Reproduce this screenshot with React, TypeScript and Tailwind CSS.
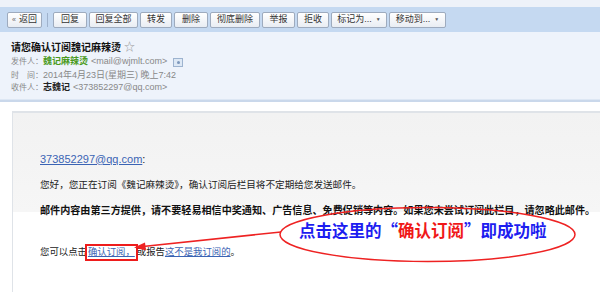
import React from "react";

const F = { fontFamily: '"Liberation Sans", "Noto Sans CJK SC", sans-serif' };

function Btn({ w, children, caret }: { w: number; children: React.ReactNode; caret?: boolean }) {
  return (
    <div
      className="h-[16px] flex items-center justify-center rounded-[2px] border border-[#9eabbe] bg-gradient-to-b from-white to-[#e9edf3] text-[9px] text-[#333] shrink-0 whitespace-nowrap"
      style={{ width: w }}
    >
      <span>{children}</span>
      {caret && <span className="ml-[4px] text-[5px] text-[#555]">▼</span>}
    </div>
  );
}

export default function App() {
  return (
    <div className="w-[600px] h-[292px] overflow-hidden bg-white relative" style={F}>
      <div className="h-[7px] bg-[#eef2f9]" />
      <div className="h-[25px] bg-[#c5d9f1] flex items-center pl-[7px]">
        <Btn w={35}>
          <span className="text-[7px] text-[#666] mr-[3px]">«</span>返回
        </Btn>
        <div className="w-px h-[14px] bg-[#9fb2cc] mx-[5px]" />
        <div className="flex gap-[2px]">
          <Btn w={34}>回复</Btn>
          <Btn w={49}>回复全部</Btn>
          <Btn w={32}>转发</Btn>
          <Btn w={34}>删除</Btn>
          <Btn w={50}>彻底删除</Btn>
          <Btn w={33}>举报</Btn>
          <Btn w={32}>拒收</Btn>
          <Btn w={56} caret>标记为...</Btn>
          <Btn w={57} caret>移动到...</Btn>
        </div>
      </div>
      <div className="h-[67px] bg-[#eef3fb] pl-[11px] pt-[7px] whitespace-nowrap">
        <div className="h-[16px] flex items-center text-[10px] font-bold text-[#111]">
          请您确认订阅魏记麻辣烫
          <span className="ml-[3px] text-[11px] font-normal text-[#999]">☆</span>
        </div>
        <div className="h-[14px] flex items-center text-[9px] text-[#888]">
          <span className="w-[32px] shrink-0 text-[8px]">发件人：</span>
          <span className="text-[#4a9a1c] font-bold">魏记麻辣烫</span>
          <span className="ml-[3px] text-[#888]">&lt;mail@wjmlt.com&gt;</span>
          <span className="ml-[6px] w-[10px] h-[9px] border border-[#9db3cf] bg-[#dde8f5] flex items-center justify-center">
            <span className="w-[3px] h-[3px] rounded-full bg-[#7d97bb]" />
          </span>
        </div>
        <div className="h-[13px] flex items-center text-[9px] text-[#888]">
          <span className="w-[32px] shrink-0 text-[8px]">时　间：</span>
          <span>2014年4月23日(星期三) 晚上7:42</span>
        </div>
        <div className="h-[12px] flex items-center text-[9px] text-[#888]">
          <span className="w-[32px] shrink-0 text-[8px]">收件人：</span>
          <span className="text-[#222] font-bold">志魏记</span>
          <span className="ml-[3px]">&lt;373852297@qq.com&gt;</span>
        </div>
      </div>
      <div className="h-[3px] bg-[#dde7f4] border-b-2 border-[#cad8eb]" />
      <div className="h-[9px] bg-white" />
      <div className="ml-[12px] h-[200px] border-l border-t-2 border-[#dfe3e8] bg-gradient-to-b from-[#f2f2f2] via-[#f6f6f6] to-white to-[35%] pl-[27px] pt-[39px] text-[#222] whitespace-nowrap">
        <div className="h-[14px] flex items-center text-[11px]">
          <span className="text-[#3b64b4] underline">373852297@qq.com</span>:
        </div>
        <div className="h-[12px]" />
        <div className="h-[14px] flex items-center text-[9.6px]">
          您好，您正在订阅《魏记麻辣烫》，确认订阅后栏目将不定期给您发送邮件。
        </div>
        <div className="h-[12px]" />
        <div className="h-[14px] flex items-center text-[10.1px] font-bold text-[#111]">
          邮件内容由第三方提供，请不要轻易相信中奖通知、广告信息、免费促销等内容。如果您未尝试订阅此栏目，请忽略此邮件。
        </div>
        <div className="h-[27px]" />
        <div className="h-[14px] flex items-center text-[9.4px]">
          您可以点击
          <span className="border-2 border-[#ee1c1c] px-[1px] h-[17px] flex items-center -mx-[2px]">
            <span className="text-[#3b64b4] underline">确认订阅，</span>
          </span>
          <span className="ml-[1px]">或报告</span>
          <span className="text-[#3b64b4] underline">这不是我订阅的</span>。
        </div>
      </div>
      <svg className="absolute left-0 top-0 pointer-events-none" width="600" height="292">
        <ellipse cx="427.5" cy="234.5" rx="147.5" ry="27" fill="none" stroke="#ee2222" strokeWidth="1.5" />
        <line x1="281" y1="232" x2="143" y2="246.5" stroke="#ee2222" strokeWidth="1.5" />
        <polygon points="134,247.5 145,242.5 146,250.5" fill="#ee2222" />
      </svg>
      <div
        className="absolute left-[299px] top-[220px] text-[16.5px] font-bold text-[#1d1df0] whitespace-nowrap leading-[20px]"
        style={{ fontFamily: '"Noto Sans CJK SC", sans-serif' }}
      >
        点击这里的“<span className="text-[#f01818]">确认订阅</span>”即成功啦
      </div>
    </div>
  );
}
